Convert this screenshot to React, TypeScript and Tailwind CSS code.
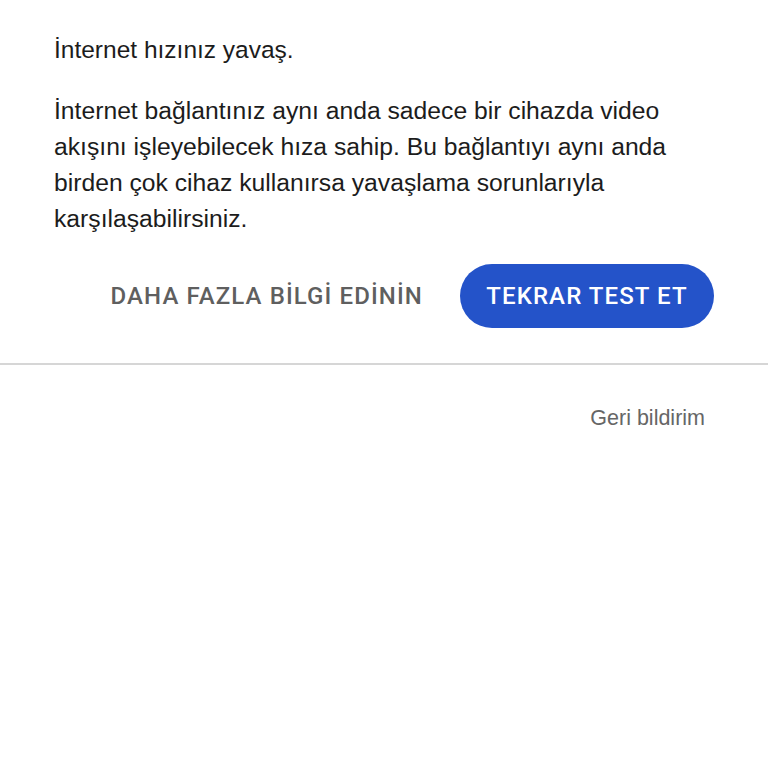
export default function App() {
  return (
    <div className="w-[768px] h-[768px] bg-white overflow-hidden" style={{ fontFamily: '"Liberation Sans", Arial, sans-serif' }}>
      <div className="pl-[54px] pr-[80px] pt-[32px]">
        <p className="text-[24.5px] leading-[36px] text-[#1c1c1c]">İnternet hızınız yavaş.</p>
        <p className="mt-[25px] text-[24.7px] leading-[36px] text-[#1c1c1c]">
          İnternet bağlantınız aynı anda sadece bir cihazda video akışını işleyebilecek hıza sahip. Bu bağlantıyı aynı anda birden çok cihaz kullanırsa yavaşlama sorunlarıyla karşılaşabilirsiniz.
        </p>
      </div>
      <div className="flex items-center justify-end gap-[37px] pr-[54px] mt-[27px]">
        <span className="text-[24px] font-medium text-[#5f5f5f] tracking-[1.1px]" style={{ fontFamily: 'Roboto, "Liberation Sans", sans-serif' }}>DAHA FAZLA BİLGİ EDİNİN</span>
        <button className="h-[64px] w-[254px] rounded-full bg-[#2453c9] text-white text-[24px] font-medium tracking-[1.1px]" style={{ fontFamily: 'Roboto, "Liberation Sans", sans-serif' }}>TEKRAR TEST ET</button>
      </div>
      <div className="mt-[35px] h-[2px] bg-[#d6d6d6]" />
      <div className="flex justify-end pr-[63px] mt-[39px]">
        <span className="text-[21.5px] leading-[28px] text-[#666666]">Geri bildirim</span>
      </div>
    </div>
  );
}
